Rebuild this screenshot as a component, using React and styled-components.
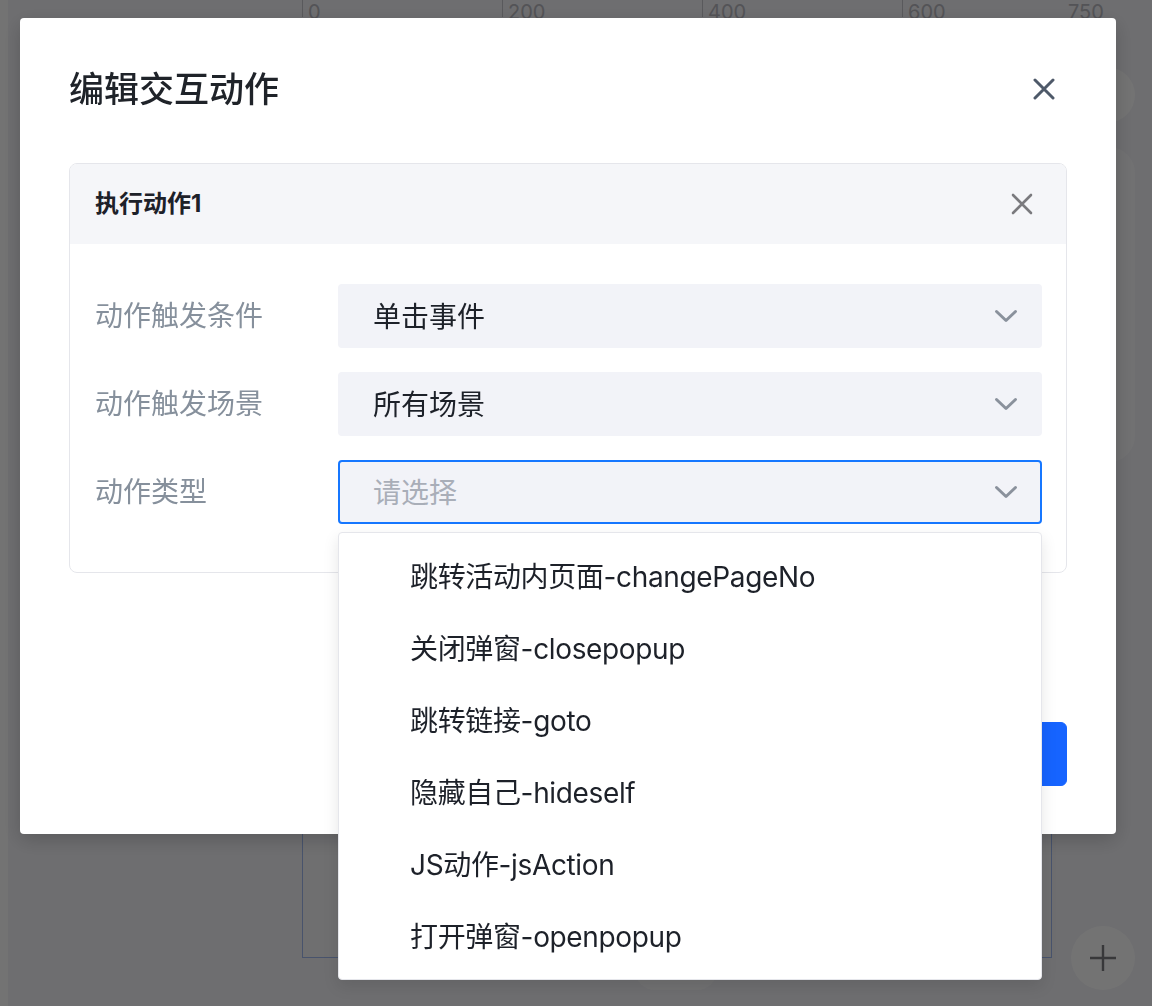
import React from 'react'
import styled, { createGlobalStyle } from 'styled-components'

const Global = createGlobalStyle`
  html, body {
    margin: 0;
    padding: 0;
    font-family: Inter, "Noto Sans CJK SC", sans-serif;
    background: #f3f3f8;
  }
  * { box-sizing: border-box; }
`

/* ---------- editor behind the dialog ---------- */

const Editor = styled.div`
  height: 1006px;
  display: flex;
  overflow: hidden;
`

const SideStrip = styled.div`
  width: 8px;
  flex-shrink: 0;
  background: #ffffff;
`

const Workspace = styled.div`
  flex: 1;
  min-width: 0;
  position: relative;
  background: #f3f3f8;
`

const Ruler = styled.div`
  height: 17px;
  display: flex;
  padding-left: 294px;
`

const Tick = styled.div`
  width: ${p => p.$w}px;
  flex-shrink: 0;
  border-left: 1px solid ${p => (p.$bare ? 'transparent' : '#c6c6cc')};
  padding: 2px 0 0 5px;
  font-size: 20px;
  line-height: 20px;
  color: #b9b9c0;
`

const ArtBoard = styled.div`
  position: absolute;
  left: 294px;
  top: 120px;
  width: 750px;
  height: 838px;
  border: 1px solid #9fb9f0;
  background: #f6f6f9;
`

const FloatCircle = styled.div`
  position: absolute;
  left: ${p => p.$x}px;
  top: ${p => p.$y}px;
  width: ${p => p.$size}px;
  height: ${p => p.$size}px;
  border-radius: 50%;
  background: #ffffff;
  display: flex;
  align-items: center;
  justify-content: center;
`

const SidePanel = styled.div`
  position: absolute;
  left: 1067px;
  top: 147px;
  width: 60px;
  height: 315px;
  border-radius: 26px;
  background: #fbfbfd;
`

const BottomPill = styled.div`
  position: absolute;
  left: 627px;
  top: 946px;
  width: 82px;
  height: 44px;
  border-radius: 20px;
  background: #fbfbfd;
`

/* ---------- dialog ---------- */

const Overlay = styled.div`
  position: fixed;
  inset: 0;
  background: rgba(0, 0, 0, 0.55);
  padding: 18px 0 0 20px;
`

const Modal = styled.div`
  width: 1096px;
  height: 816px;
  background: #fff;
  border-radius: 4px;
  box-shadow: 0 6px 20px rgba(0, 0, 0, 0.18);
  padding: 49px 49px 48px;
  display: flex;
  flex-direction: column;
`

const ModalHead = styled.div`
  display: flex;
  align-items: center;
  justify-content: space-between;
  height: 44px;
  margin-bottom: 1px;
`

const Title = styled.h2`
  margin: 0;
  font-size: 35px;
  line-height: 44px;
  font-weight: 500;
  color: #1f2329;
`

const CloseBtn = styled.button`
  border: 0;
  padding: 0;
  background: none;
  display: flex;
  margin-right: ${p => p.$mr}px;
  cursor: pointer;
`

const Card = styled.div`
  margin-top: 51px;
  border: 1px solid #e5e6eb;
  border-radius: 8px;
`

const CardHead = styled.div`
  height: 80px;
  background: #f5f6f9;
  border-radius: 7px 7px 0 0;
  display: flex;
  align-items: center;
  justify-content: space-between;
  padding: 0 33px 0 25px;
`

const CardTitle = styled.div`
  font-size: 24px;
  line-height: 30px;
  font-weight: 700;
  color: #1d2129;
`

const CardBody = styled.div`
  padding: 40px 24px 48px 25px;
  display: flex;
  flex-direction: column;
  gap: 24px;
`

const Row = styled.div`
  display: grid;
  grid-template-columns: 243px 1fr;
  align-items: center;
`

const Label = styled.div`
  font-size: 28px;
  line-height: 36px;
  color: #86909c;
`

const SelectWrap = styled.div`
  position: relative;
`

const Select = styled.div`
  height: 64px;
  border-radius: 4px;
  background: #f2f3f8;
  border: 2px solid ${p => (p.$focused ? '#1677ff' : 'transparent')};
  display: flex;
  align-items: center;
  justify-content: space-between;
  padding: 0 22px 2px 33px;
  font-size: 28px;
  color: ${p => (p.$placeholder ? '#a9aeb8' : '#1d2129')};

  svg {
    margin-top: 2px;
  }
`

const Menu = styled.ul`
  position: absolute;
  left: 0;
  right: 0;
  top: 72px;
  z-index: 10;
  margin: 0;
  padding: 7px 0;
  list-style: none;
  background: #fff;
  border: 1px solid #e5e6eb;
  border-radius: 4px;
  box-shadow: 0 6px 16px rgba(0, 0, 0, 0.1);
`

const MenuItem = styled.li`
  height: 72px;
  display: flex;
  align-items: center;
  padding: 0 0 2px 71px;
  font-size: 28px;
  letter-spacing: -0.35px;
  color: #1d2129;
`

const Footer = styled.div`
  margin-top: auto;
  display: flex;
  justify-content: flex-end;
  gap: 16px;
`

const Button = styled.button`
  height: 64px;
  min-width: 120px;
  border-radius: 6px;
  font-family: inherit;
  font-size: 26px;
  border: 1px solid ${p => (p.$primary ? '#1664ff' : '#e5e6eb')};
  background: ${p => (p.$primary ? '#1664ff' : '#fff')};
  color: ${p => (p.$primary ? '#fff' : '#1d2129')};
`

const Cross = ({ size, stroke, color }) => (
  <svg width={size} height={size} viewBox="0 0 22 22" fill="none">
    <path
      d="M2 2L20 20M20 2L2 20"
      stroke={color}
      strokeWidth={stroke}
      strokeLinecap="round"
    />
  </svg>
)

const Chevron = () => (
  <svg width="24" height="14" viewBox="0 0 24 14" fill="none">
    <path
      d="M2.5 2.5L12 11.5L21.5 2.5"
      stroke="#8a919c"
      strokeWidth="3"
      strokeLinecap="round"
      strokeLinejoin="round"
    />
  </svg>
)

const Plus = () => (
  <svg width="30" height="30" viewBox="0 0 30 30" fill="none">
    <path d="M15 2V28M2 15H28" stroke="#7c7c82" strokeWidth="2.4" />
  </svg>
)

const ticks = [
  { label: '0', w: 200 },
  { label: '200', w: 200 },
  { label: '400', w: 200 },
  { label: '600', w: 160 },
  { label: '750', w: 60, bare: true },
]

const actions = [
  '跳转活动内页面-changePageNo',
  '关闭弹窗-closepopup',
  '跳转链接-goto',
  '隐藏自己-hideself',
  'JS动作-jsAction',
  '打开弹窗-openpopup',
]

const App = () => {
  return (
    <>
      <Global />
      <Editor>
        <SideStrip />
        <Workspace>
          <Ruler>
            {ticks.map(t => (
              <Tick key={t.label} $w={t.w} $bare={t.bare}>
                {t.label}
              </Tick>
            ))}
          </Ruler>
          <ArtBoard />
          <FloatCircle $x={1071} $y={67} $size={56} />
          <SidePanel />
          <BottomPill />
          <FloatCircle $x={1063} $y={926} $size={64}>
            <Plus />
          </FloatCircle>
        </Workspace>
      </Editor>

      <Overlay>
        <Modal>
          <ModalHead>
            <Title>编辑交互动作</Title>
            <CloseBtn $mr={12}>
              <Cross size={22} stroke={3} color="#4e5969" />
            </CloseBtn>
          </ModalHead>

          <Card>
            <CardHead>
              <CardTitle>执行动作1</CardTitle>
              <CloseBtn $mr={0}>
                <Cross size={22} stroke={2.6} color="#7a7a7e" />
              </CloseBtn>
            </CardHead>
            <CardBody>
              <Row>
                <Label>动作触发条件</Label>
                <Select>
                  单击事件
                  <Chevron />
                </Select>
              </Row>
              <Row>
                <Label>动作触发场景</Label>
                <Select>
                  所有场景
                  <Chevron />
                </Select>
              </Row>
              <Row>
                <Label>动作类型</Label>
                <SelectWrap>
                  <Select $focused $placeholder>
                    请选择
                    <Chevron />
                  </Select>
                  <Menu>
                    {actions.map(a => (
                      <MenuItem key={a}>{a}</MenuItem>
                    ))}
                  </Menu>
                </SelectWrap>
              </Row>
            </CardBody>
          </Card>

          <Footer>
            <Button>取消</Button>
            <Button $primary>确定</Button>
          </Footer>
        </Modal>
      </Overlay>
    </>
  )
}

export default App
